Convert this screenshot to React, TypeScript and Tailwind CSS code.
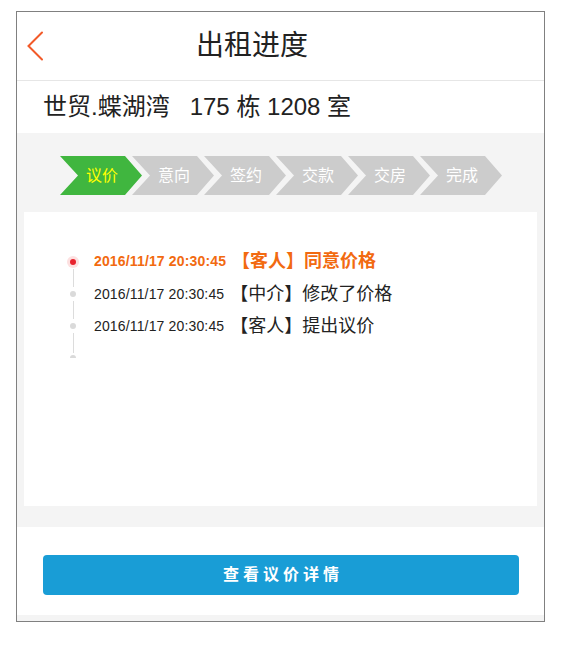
const steps = ['议价', '意向', '签约', '交款', '交房', '完成']

const events = [
  { time: '2016/11/17 20:30:45', text: '【客人】同意价格', active: true, h: 'h-[33px]' },
  { time: '2016/11/17 20:30:45', text: '【中介】修改了价格', active: false, h: 'h-[32px]' },
  { time: '2016/11/17 20:30:45', text: '【客人】提出议价', active: false, h: 'h-[32px]' },
]

function BackArrow() {
  return (
    <svg width="18" height="30" viewBox="0 0 18 30" fill="none">
      <path d="M16 1.5 L2.5 15 L16 28.5" stroke="#f25a29" strokeWidth="2" strokeLinecap="round" />
    </svg>
  )
}

export default function App() {
  return (
    <div
      className="w-full h-[649px] bg-white pt-[11px] pl-[16px]"
      style={{ fontFamily: '"Liberation Sans", "Noto Sans CJK SC", sans-serif' }}
    >
      <div className="w-[529px] h-[611px] border border-[#808080] flex flex-col">
        {/* Header */}
        <div className="h-[69px] shrink-0 border-b border-[#e6e6e6] flex items-center pl-[9px]">
          <BackArrow />
          <h1 className="ml-[152px] text-[28px] text-[#222] leading-none">出租进度</h1>
        </div>

        {/* Address */}
        <div className="h-[52px] shrink-0 flex items-center pl-[26px] text-[24px] text-[#222] whitespace-pre">
          世贸.蝶湖湾   175 栋 1208 室
        </div>

        {/* Progress */}
        <div className="h-[394px] shrink-0 bg-[#f4f4f4] flex flex-col pt-[23px]">
          <div className="flex pl-[43px]">
            {steps.map((s, i) => (
              <div
                key={s}
                className={`w-[82px] h-[39px] shrink-0 flex items-center justify-center pl-[2px] text-[16px] [clip-path:polygon(0_0,65px_0,82px_50%,65px_100%,0_100%,18px_50%)] ${
                  i === 0 ? 'bg-[#40b63f] text-[#ffff00]' : 'bg-[#cccccc] text-white -ml-[10px]'
                }`}
              >
                {s}
              </div>
            ))}
          </div>

          <div className="mt-[17px] ml-[7px] w-[513px] h-[294px] bg-white pl-[43px] pt-[33px]">
            {events.map((e, i) => (
              <div key={i} className={`flex items-center ${e.h}`}>
                <div className="w-[12px] h-full flex flex-col items-center">
                  <div className={`flex-1 w-px ${i === 0 ? 'bg-transparent' : 'bg-[#dcdcdc]'}`} />
                  {e.active ? (
                    <div className="my-[1px] w-[12px] h-[12px] rounded-full bg-[#fde0e0] flex items-center justify-center">
                      <div className="w-[6px] h-[6px] rounded-full bg-[#e8232e]" />
                    </div>
                  ) : (
                    <div className="my-[4px] w-[6px] h-[6px] rounded-full bg-[#dadada]" />
                  )}
                  <div className="flex-1 w-px bg-[#dcdcdc]" />
                </div>
                <span
                  className={`ml-[15px] text-[14px] tracking-[0.15px] ${
                    e.active ? 'font-bold text-[#f26a10]' : 'text-[#222]'
                  }`}
                >
                  {e.time}
                </span>
                <span
                  className={`ml-[6px] text-[18px] ${
                    e.active ? 'font-bold text-[#f26a10]' : 'text-[#222]'
                  }`}
                >
                  {e.text}
                </span>
              </div>
            ))}
            <div className="w-[12px] h-[16px] flex flex-col items-center">
              <div className="flex-1 w-px bg-[#dcdcdc]" />
              <div className="mt-[2px] w-[6px] h-[3px] rounded-t-full bg-[#dadada]" />
            </div>
          </div>
        </div>

        {/* Action */}
        <div className="h-[88px] shrink-0 bg-white pt-[28px] pl-[26px]">
          <button className="w-[476px] h-[40px] rounded-[4px] bg-[#199dd6] text-white text-[16px] font-bold tracking-[4px] pl-[4px]">
            查看议价详情
          </button>
        </div>
        <div className="flex-1 bg-[#f4f4f4]" />
      </div>
    </div>
  )
}
